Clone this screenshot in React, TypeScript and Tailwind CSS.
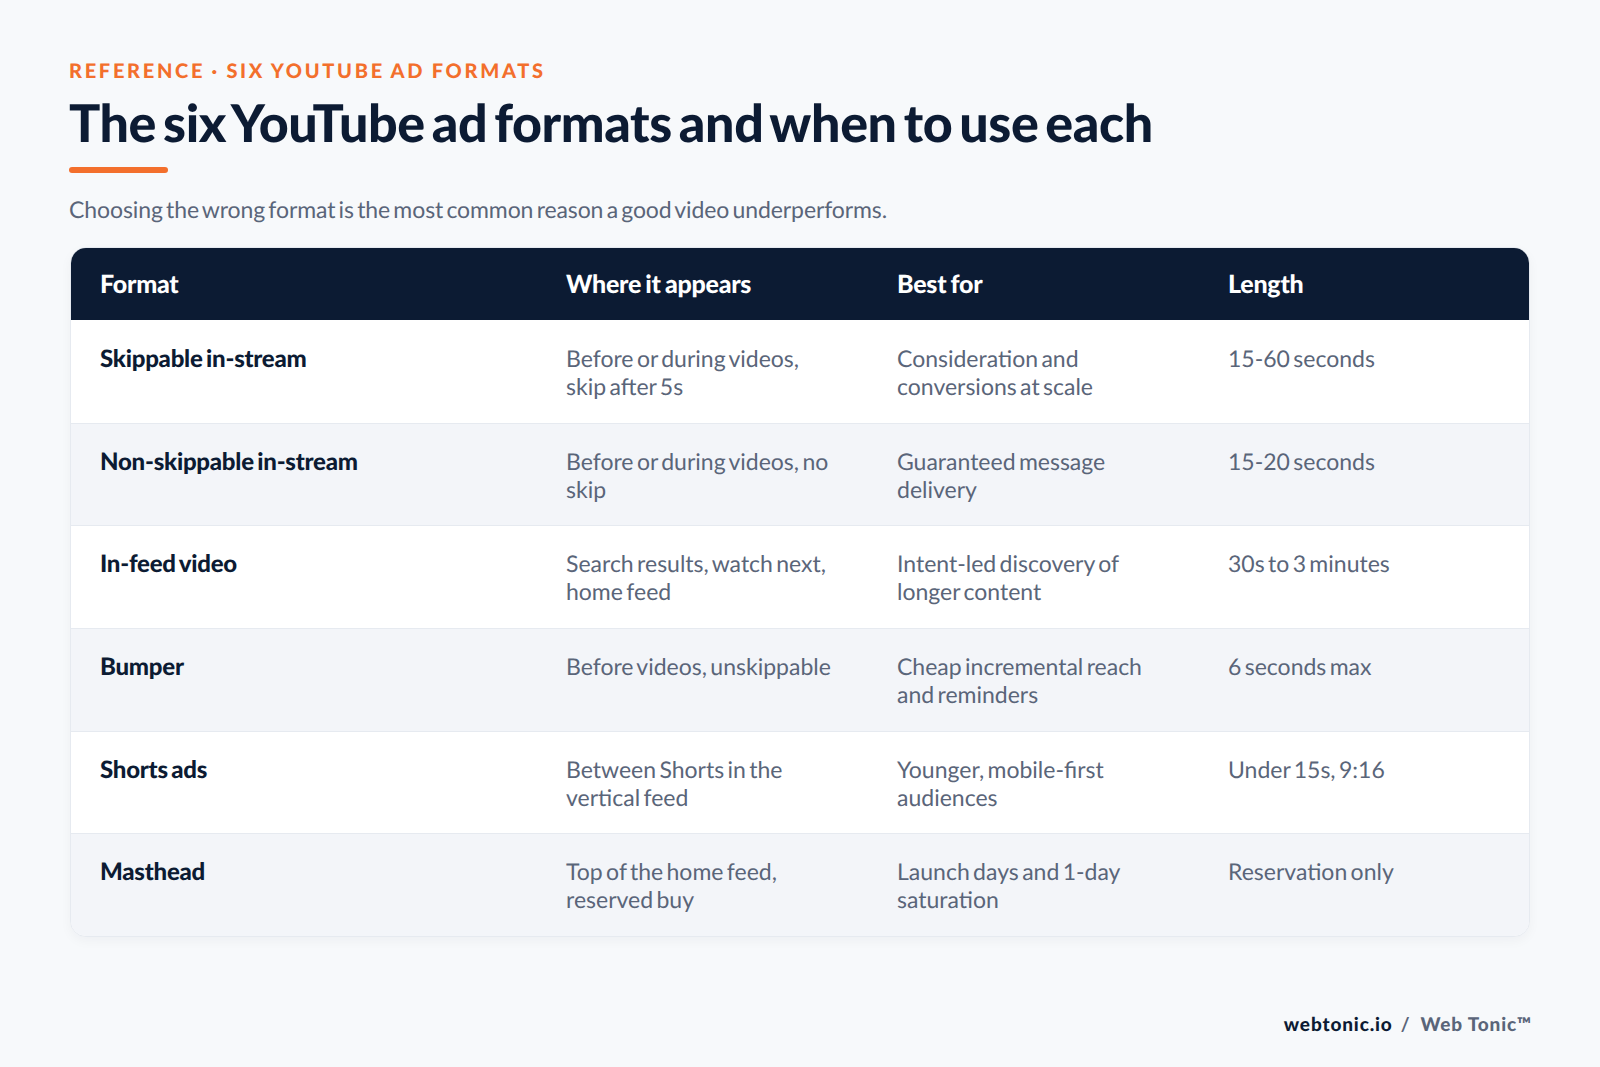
const rows = [
  ["Skippable in-stream", ["Before or during videos,", "skip after 5s"], ["Consideration and", "conversions at scale"], "15-60 seconds"],
  ["Non-skippable in-stream", ["Before or during videos, no", "skip"], ["Guaranteed message", "delivery"], "15-20 seconds"],
  ["In-feed video", ["Search results, watch next,", "home feed"], ["Intent-led discovery of", "longer content"], "30s to 3 minutes"],
  ["Bumper", ["Before videos, unskippable"], ["Cheap incremental reach", "and reminders"], "6 seconds max"],
  ["Shorts ads", ["Between Shorts in the", "vertical feed"], ["Younger, mobile-first", "audiences"], "Under 15s, 9:16"],
  ["Masthead", ["Top of the home feed,", "reserved buy"], ["Launch days and 1-day", "saturation"], "Reservation only"],
] as const;

export default function App() {
  return (
    <div className="w-[1600px] h-[1067px] bg-[#f7f9fb] pl-[69px] pr-[70px] pt-[59px] font-['Lato',sans-serif] flex flex-col overflow-hidden [text-rendering:geometricPrecision]">
      <div className="text-[20px] leading-[24px] font-black tracking-[0.135em] [word-spacing:-1px] text-[#f36f2c]">REFERENCE · SIX YOUTUBE AD FORMATS</div>
      <h1 className="mt-[9px] text-[52px] leading-[62px] font-black tracking-[-0.4px] [word-spacing:-5px] text-[#0c1b33]">The six YouTube ad formats and when to use each</h1>
      <div className="mt-[13px] w-[99px] h-[6px] rounded-[3px] bg-[#f36f2c]" />
      <p className="mt-[21px] text-[23px] leading-[30px] text-[#5a6579] tracking-[-0.1px] [word-spacing:-2.5px]">Choosing the wrong format is the most common reason a good video underperforms.</p>
      <div className="mt-[23px] ml-px w-[1460px] rounded-[16px] border border-[#e6eaf0] overflow-hidden shadow-[0_4px_12px_rgba(12,27,51,0.04)] bg-white">
        <div className="grid grid-cols-[466px_331px_331px_1fr] h-[72px] pt-[2px] items-center bg-[#0c1b33] text-white text-[25px] font-black tracking-[-0.01em] [word-spacing:-1.5px] pl-[29px]">
          <div>Format</div><div>Where it appears</div><div>Best for</div><div>Length</div>
        </div>
        {rows.map((r, i) => (
          <div key={r[0]} className={`grid grid-cols-[466px_331px_331px_1fr] h-[102.67px] pl-[29px] text-[23px] leading-[28px] [word-spacing:-2.5px] text-[#5a6579] ${i % 2 ? "bg-[#f3f5f9]" : "bg-white"} ${i > 0 ? "border-t border-[#e6eaf0] pt-[23px]" : "pt-[24px]"}`}>
            <div className="pt-[1px] font-black text-[24px] tracking-[-0.01em] [word-spacing:-2px] text-[#0c1b33]">{r[0]}</div>
            <div>{r[1].map((l) => <div key={l}>{l}</div>)}</div>
            <div>{r[2].map((l) => <div key={l}>{l}</div>)}</div>
            <div>{r[3]}</div>
          </div>
        ))}
      </div>
      <div className="mt-auto mb-[30px] -mr-[2px] flex justify-end gap-[10px] text-[19px] leading-[24px] font-black tracking-[0.045em] text-[#5a6579]">
        <span className="mr-[-2px] text-[#0c1b33]">webtonic.io</span><span className="font-bold">/</span><span>Web Tonic™</span>
      </div>
    </div>
  );
}
